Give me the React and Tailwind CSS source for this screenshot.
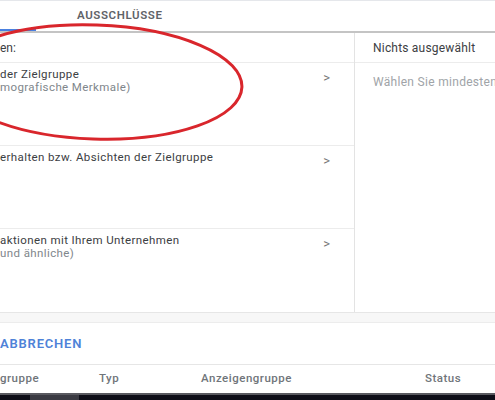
import React from "react";

const rows = [
  { title: "der Zielgruppe", sub: "mografische Merkmale)" },
  { title: "erhalten bzw. Absichten der Zielgruppe", sub: "" },
  { title: "aktionen mit Ihrem Unternehmen", sub: "und ähnliche)" },
];

export default function App() {
  return (
    <div
      className="relative w-[495px] h-[400px] overflow-hidden bg-white flex flex-col"
      style={{ fontFamily: "Roboto, 'Liberation Sans', Arial, sans-serif" }}
    >
      {/* Tabs */}
      <div className="h-[33px] flex border-t border-gray-200 border-b-2 border-b-[#c4c4c4] shrink-0">
        <div className="w-[36px] h-full border-b-2 border-[#4a80e0] -mb-[2px]" />
        <div className="h-full flex items-center pl-[41px] text-[11.5px] font-semibold tracking-[0.6px] text-[#5f6368]">
          AUSSCHLÜSSE
        </div>
      </div>

      {/* Panels */}
      <div className="h-[279px] flex shrink-0">
        <div className="w-[355px] border-r border-[#e3e3e3] flex flex-col">
          <div className="h-[30px] flex items-center border-b border-[#ececec] text-[12px] text-[#3c4043] pt-[1px]">
            en:
          </div>
          {rows.map((r, i) => (
            <div
              key={i}
              className={
                "h-[83px] flex justify-between pt-[5px] pr-[24px] " +
                (i < 2 ? "border-b border-[#ececec]" : "")
              }
            >
              <div className="leading-[13px]">
                <div className="text-[11.5px] text-[#3c4043] tracking-[0.4px]">{r.title}</div>
                {r.sub && (
                  <div className="text-[11.5px] text-[#80868b] tracking-[0.4px]">{r.sub}</div>
                )}
              </div>
              <div className="text-[13px] text-[#777] leading-[13px] mt-[3px]">&gt;</div>
            </div>
          ))}
        </div>
        <div className="flex-1 flex flex-col overflow-hidden">
          <div className="h-[30px] flex items-center border-b border-[#ececec] pl-[18px] text-[12px] text-[#3c4043] whitespace-nowrap pt-[1px] tracking-[0.2px]">
            Nichts ausgewählt
          </div>
          <div className="pl-[18px] pt-[10px] text-[12px] text-[#a0a4a8] whitespace-nowrap tracking-[0.3px]">
            Wählen Sie mindestens eine Option aus
          </div>
        </div>
      </div>

      {/* Spacer band */}
      <div className="h-[11px] bg-[#f7f7f7] border-t border-[#e6e6e6] border-b border-b-[#ececec] shrink-0" />

      {/* Action row */}
      <div className="h-[42px] flex items-center border-b border-[#e6e6e6] shrink-0">
        <span className="text-[13px] font-semibold tracking-[0.8px] text-[#4e82d8]">ABBRECHEN</span>
      </div>

      {/* Table header */}
      <div className="h-[28px] flex items-center text-[11.5px] font-medium text-[#70757a] tracking-[0.5px] shrink-0">
        <span className="w-[99px]">gruppe</span>
        <span className="w-[102px]">Typ</span>
        <span className="w-[224px]">Anzeigengruppe</span>
        <span>Status</span>
      </div>

      {/* Bottom bar */}
      <div className="flex-1 bg-[#0e0e18] border-t-2 border-[#5a5a60] flex">
        <div className="ml-[30px] w-[49px] bg-[#3a3a42]" />
      </div>

      {/* Red annotation ellipse */}
      <svg className="absolute left-0 top-0 pointer-events-none" width="495" height="400">
        <ellipse
          cx="95"
          cy="82"
          rx="147"
          ry="57"
          fill="none"
          stroke="#d9262c"
          strokeWidth="3"
          transform="rotate(2 95 82)"
        />
      </svg>
    </div>
  );
}
